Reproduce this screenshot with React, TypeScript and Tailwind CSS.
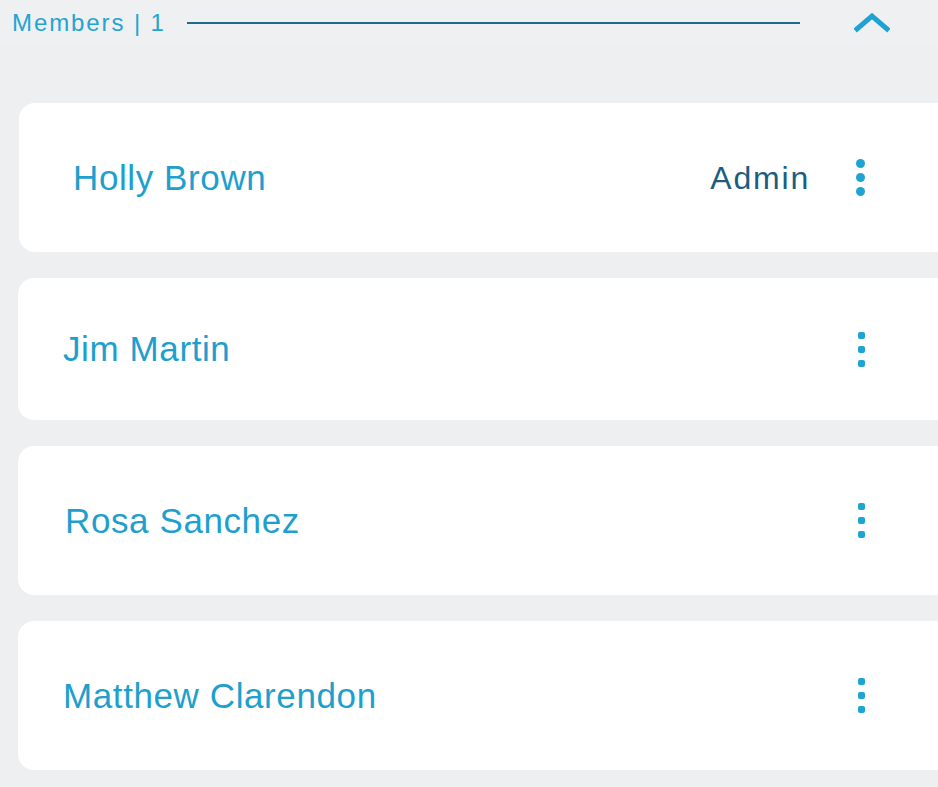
import React from "react";

type Member = { name: string; role?: string; pad: string; h: string; big?: boolean };

const members: Member[] = [
  { name: "Holly Brown", role: "Admin", pad: "pl-[54px]", h: "h-[149px]", big: true },
  { name: "Jim Martin", pad: "pl-[45px]", h: "h-[142px]" },
  { name: "Rosa Sanchez", pad: "pl-[47px]", h: "h-[149px]" },
  { name: "Matthew Clarendon", pad: "pl-[45px]", h: "h-[149px]" },
];

function Dots({ big }: { big?: boolean }) {
  return (
    <div className={big ? "flex flex-col items-center gap-[5px]" : "flex flex-col items-center gap-[7px]"}>
      <span className={big ? "w-[9px] h-[9px] rounded-full bg-[#1ea3d3]" : "w-[7px] h-[7px] rounded-[2px] bg-[#1ea3d3]"} />
      <span className={big ? "w-[9px] h-[9px] rounded-full bg-[#1ea3d3]" : "w-[7px] h-[7px] rounded-[2px] bg-[#1ea3d3]"} />
      <span className={big ? "w-[9px] h-[9px] rounded-full bg-[#1ea3d3]" : "w-[7px] h-[7px] rounded-[2px] bg-[#1ea3d3]"} />
    </div>
  );
}

function MemberCard(member: Member) {
  return (
    <div className={`flex items-center bg-white rounded-[16px] ${member.h} ${member.pad} pr-[103px]`}>
      <p className="flex-1 text-[35px] tracking-[0.6px] text-[#1e9fcd] pt-[1px]">{member.name}</p>
      {member.role && (
        <p className="mr-[46px] text-[32px] tracking-[1.8px] text-[#1b5d82]">{member.role}</p>
      )}
      <Dots big={member.big} />
    </div>
  );
}

export default function App() {
  return (
    <div className="w-[938px] h-[787px] overflow-hidden bg-[#eeeff1] font-['Liberation_Sans',Arial,sans-serif]">
      <div className="flex items-center h-[46px] pl-[12px] bg-[#eff0f1]">
        <span className="text-[24px] tracking-[1.9px] text-[#23a4d3] leading-none">Members | 1</span>
        <div className="ml-[21px] w-[613px] h-[2px] bg-[#1d6a8f]" />
        <svg className="ml-[54px] mb-[2px]" width="36" height="22" viewBox="0 0 36 22">
          <path d="M3 18 L18 5 L33 18" fill="none" stroke="#1ea2d2" strokeWidth="5" strokeLinecap="square" />
        </svg>
      </div>
      <div className="flex flex-col gap-[26px] pt-[57px] pl-[18px] mr-[-30px]">
        {members.map((m, i) => (
          <div key={m.name} className={i === 0 ? "ml-[1px]" : ""}>
            <MemberCard {...m} />
          </div>
        ))}
      </div>
    </div>
  );
}
